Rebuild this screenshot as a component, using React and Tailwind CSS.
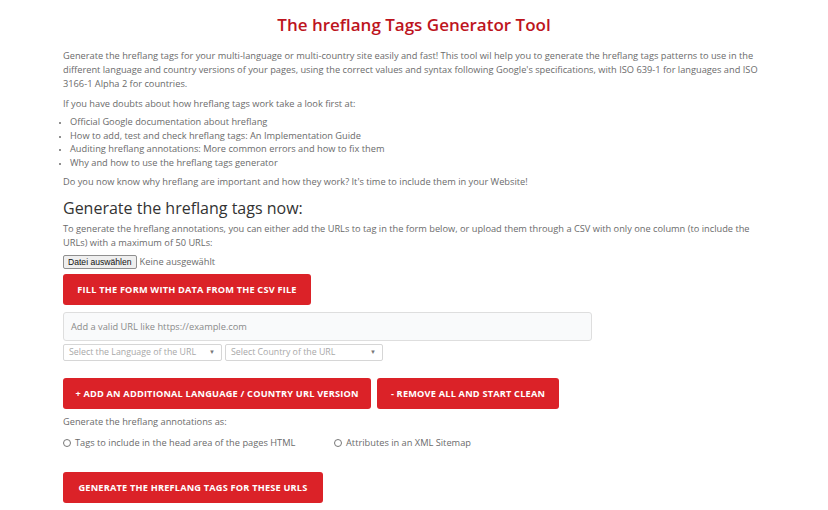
import React from "react";

const font = { fontFamily: '"Open Sans", "Liberation Sans", sans-serif' };

const RedButton = ({ children, className = "" }) => (
  <button
    className={
      "h-[31px] whitespace-nowrap rounded-[3px] bg-[#db2228] text-center text-[9.2px] font-bold uppercase tracking-[0.2px] text-white " +
      className
    }
  >
    {children}
  </button>
);

const Select = ({ label, className = "" }) => (
  <div
    className={
      "flex h-[17px] items-center justify-between rounded-[2px] border border-[#d6d6d6] bg-white pl-[5px] pr-[6px] text-[8.8px] text-[#a8a8a8] " +
      className
    }
  >
    <span>{label}</span>
    <span className="text-[6px] text-[#777]">▼</span>
  </div>
);

export default function App() {
  return (
    <div className="min-h-[510px] w-full bg-white" style={font}>
      <div className="mx-auto w-[702px] pt-[14px]">
        <h1 className="text-center text-[17px] font-semibold leading-[22px] text-[#bd141d]">
          The hreflang Tags Generator Tool
        </h1>

        <div className="mt-[13px] text-[9.25px] leading-[14px] text-[#6b6b6b]">
          <p>
            Generate the hreflang tags for your multi-language or multi-country site easily and fast! This tool wil
            help you to generate the hreflang tags patterns to use in the different language and country versions of
            your pages, using the correct values and syntax following Google's specifications, with ISO 639-1 for
            languages and ISO 3166-1 Alpha 2 for countries.
          </p>
          <p className="mt-[6px]">If you have doubts about how hreflang tags work take a look first at:</p>
          <ul className="mt-[4px] list-disc pl-[7px] leading-[13.5px] marker:text-[7px]">
            <li>Official Google documentation about hreflang</li>
            <li>How to add, test and check hreflang tags: An Implementation Guide</li>
            <li>Auditing hreflang annotations: More common errors and how to fix them</li>
            <li>Why and how to use the hreflang tags generator</li>
          </ul>
          <p className="mt-[6px]">
            Do you now know why hreflang are important and how they work? It's time to include them in your Website!
          </p>
        </div>

        <h2 className="mt-[8px] text-[16px] font-medium leading-[22px] text-[#333]">Generate the hreflang tags now:</h2>

        <p className="mt-[3px] text-[9.25px] leading-[14px] text-[#6b6b6b]">
          To generate the hreflang annotations, you can either add the URLs to tag in the form below, or upload them
          through a CSV with only one column (to include the URLs) with a maximum of 50 URLs:
        </p>

        <div className="mt-[5px] flex items-center gap-[3px] text-[9.25px] text-[#6b6b6b]">
          <span
            className="rounded-[2px] border border-[#8f8f8f] bg-[#efefef] px-[4px] text-[8.6px] leading-[12px] text-[#111]"
            style={{ fontFamily: '"Liberation Sans", Arial, sans-serif' }}
          >
            Datei auswählen
          </span>
          <span>Keine ausgewählt</span>
        </div>

        <RedButton className="mt-[5px] w-[248px]">Fill the form with data from the CSV file</RedButton>

        <div className="mt-[7px] flex h-[29px] w-[529px] items-center rounded-[3px] border border-[#dedede] bg-[#f9fafb] px-[7px] text-[9.25px] text-[#8a8a8a]">
          Add a valid URL like https://example.com
        </div>

        <div className="mt-[3px] flex gap-[3px]">
          <Select label="Select the Language of the URL" className="w-[159px]" />
          <Select label="Select Country of the URL" className="w-[158px]" />
        </div>

        <div className="mt-[17px] flex gap-[6px]">
          <RedButton className="w-[308px]">+ Add an additional language / country URL version</RedButton>
          <RedButton className="w-[182px]">- Remove all and start clean</RedButton>
        </div>

        <p className="mt-[6px] text-[9.25px] leading-[14px] text-[#6b6b6b]">Generate the hreflang annotations as:</p>

        <div className="mt-[7px] flex text-[9.25px] leading-[14px] text-[#6b6b6b]">
          <label className="flex w-[271px] items-center gap-[4px]">
            <span className="inline-block h-[8px] w-[8px] rounded-full border border-[#777] bg-white" />
            Tags to include in the head area of the pages HTML
          </label>
          <label className="flex items-center gap-[4px]">
            <span className="inline-block h-[8px] w-[8px] rounded-full border border-[#777] bg-white" />
            Attributes in an XML Sitemap
          </label>
        </div>

        <RedButton className="mt-[22px] w-[260px]">Generate the hreflang tags for these URLs</RedButton>
      </div>
    </div>
  );
}
